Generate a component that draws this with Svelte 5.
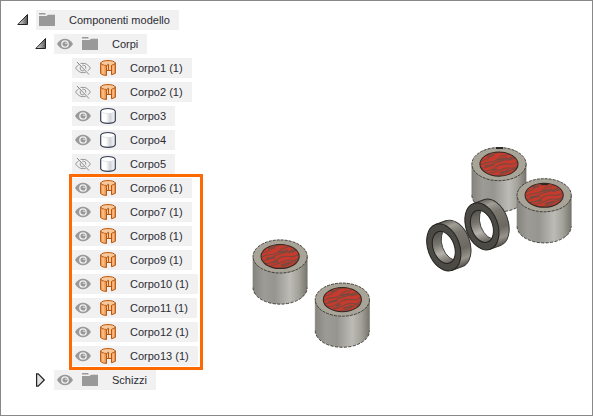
<script>
  let rootOpen = $state(true);
  let bodiesOpen = $state(true);
  let sketchesOpen = $state(false);
  let bodiesVisible = $state(true);
  let sketchesVisible = $state(true);

  let loose = $state([
    { name: 'Corpo1 (1)', kind: 'sheet', visible: false },
    { name: 'Corpo2 (1)', kind: 'sheet', visible: false },
    { name: 'Corpo3', kind: 'solid', visible: true },
    { name: 'Corpo4', kind: 'solid', visible: true },
    { name: 'Corpo5', kind: 'solid', visible: false }
  ]);
  let marked = $state(
    [6, 7, 8, 9, 10, 11, 12, 13].map((n) => ({ name: `Corpo${n} (1)`, kind: 'sheet', visible: true }))
  );

  const cylinders = [
    { x: 499, y: 164, notch: -16 },
    { x: 544, y: 195, notch: -11 },
    { x: 281, y: 256 },
    { x: 343, y: 299 }
  ];
  const rings = [
    { x: 482, y: 226 },
    { x: 444, y: 247 }
  ];
</script>

{#snippet expander(open, toggle, label)}
  <button class="expander" type="button" aria-label={label} aria-expanded={open} onclick={toggle}>
    <svg width="12" height="16" viewBox="0 0 12 16">
      {#if open}
        <path d="M10.500 2.500V12.500H.8Z" fill="url(#wedge)" stroke="#222" />
      {:else}
        <path d="M1.600 1.800H3.200L9.300 8L3.200 14.200H1.600Z" fill="#e2e2e2" stroke="#222" stroke-width="1.200" />
      {/if}
    </svg>
  </button>
{/snippet}

{#snippet eye(visible, toggle, label)}
  <button class="eye" type="button" aria-label={label} aria-pressed={visible} onclick={toggle}>
    <svg width="16" height="16" viewBox="0 0 16 16">
      {#if visible}
        <path d="M0 8C2.200 4.300 5 2.800 8 2.800S13.800 4.300 16 8C13.800 11.700 11 13.200 8 13.200S2.200 11.700 0 8Z" fill="#999" />
        <circle cx="8" cy="8" r="3.200" fill="#999" stroke="#f1f1f1" stroke-width="1.300" />
        <circle cx="9" cy="7.200" r=".8" fill="#f1f1f1" />
      {:else}
        <g fill="none" stroke="#999">
          <path d="M.6 8C2.800 4.700 5.300 3.300 8 3.300S13.200 4.700 15.400 8C13.200 11.300 10.700 12.700 8 12.700S2.800 11.300 .6 8Z" />
          <circle cx="8" cy="8" r="2.900" />
          <path d="M2.500 2L14.500 14.500" stroke="#f1f1f1" stroke-width="2" />
          <path d="M2 2L14 14.500" stroke="#888" />
        </g>
      {/if}
    </svg>
  </button>
{/snippet}

{#snippet folder()}
  <svg class="icon" width="16" height="16" viewBox="0 0 16 16" fill="#999">
    <path d="M0 1H6L7 2.500H0Z" />
    <path d="M0 4H7.500L9 2.800H16V14H0Z" />
  </svg>
{/snippet}

{#snippet bodyIcon(kind)}
  <svg class="icon" width="16" height="16" viewBox="0 0 16 16">
    {#if kind === 'sheet'}
      <g stroke="#b9560f" stroke-linejoin="round">
        <path d="M.6 3C1.500 1.200 4.500 .6 8 .6S14.500 1.200 15.400 3L12 5.500V10.500H7V5.500Z" fill="#fbc89a" stroke="none" />
        <path d="M.6 3V13.500C2 14.800 4 15.400 6.500 15.400V5.500C4 5.300 1.600 4.700 .6 3Z" fill="url(#copper)" />
        <path d="M11.500 5.300V14.800L15.400 13.300V3Q14.500 4.600 11.500 5.300Z" fill="url(#copper)" />
        <path d="M.6 3C1.500 1.200 4.500 .6 8 .6S14.500 1.200 15.400 3M6.500 5.500L8.500 4.200V10.500M6.500 10.500H11.500" fill="none" />
      </g>
    {:else}
      <path d="M.7 3.500C1.500 1.500 4.500 .7 8 .7S14.500 1.500 15.300 3.500V12.700C14.500 14.600 11.500 15.300 8 15.300S1.500 14.600 .7 12.700Z" fill="url(#steel)" stroke="#3b4455" stroke-width="1.200" />
      <ellipse cx="8" cy="3.400" rx="6.400" ry="2.100" fill="#fff" />
      <path d="M1.500 4.200C4 6 12 6 14.500 4.200" fill="none" stroke="#d5d8dd" stroke-width=".7" />
    {/if}
  </svg>
{/snippet}

{#snippet bodyRow(item)}
  <li class="row leaf">
    <div class="bar">
      {@render eye(item.visible, () => (item.visible = !item.visible), `Visibilità ${item.name}`)}
      {@render bodyIcon(item.kind)}
      <span class="label">{item.name}</span>
    </div>
  </li>
{/snippet}

<svg class="defs" width="0" height="0" aria-hidden="true">
  <defs>
    <linearGradient id="wedge"><stop stop-color="#eee" /><stop offset="1" stop-color="#555" /></linearGradient>
    <linearGradient id="copper"><stop stop-color="#ee8c3c" /><stop offset=".4" stop-color="#fbc592" /><stop offset="1" stop-color="#e98434" /></linearGradient>
    <linearGradient id="steel"><stop stop-color="#fff" /><stop offset=".35" stop-color="#fff" /><stop offset=".65" stop-color="#cfd3d9" /><stop offset="1" stop-color="#fff" /></linearGradient>
  </defs>
</svg>

<main>
  <nav aria-label="Componenti modello">
    <ul class="tree">
      <li>
        <div class="row">
          {@render expander(rootOpen, () => (rootOpen = !rootOpen), 'Espandi Componenti modello')}
          <div class="bar">{@render folder()}<span class="label">Componenti modello</span></div>
        </div>
        {#if rootOpen}
          <ul class="nested">
            <li>
              <div class="row">
                {@render expander(bodiesOpen, () => (bodiesOpen = !bodiesOpen), 'Espandi Corpi')}
                <div class="bar">
                  {@render eye(bodiesVisible, () => (bodiesVisible = !bodiesVisible), 'Visibilità Corpi')}
                  {@render folder()}
                  <span class="label">Corpi</span>
                </div>
              </div>
              {#if bodiesOpen}
                <ul class="nested">
                  {#each loose as item}{@render bodyRow(item)}{/each}
                  <li class="marked">
                    <ul>
                      {#each marked as item}{@render bodyRow(item)}{/each}
                    </ul>
                  </li>
                </ul>
              {/if}
            </li>
            <li class="row">
              {@render expander(sketchesOpen, () => (sketchesOpen = !sketchesOpen), 'Espandi Schizzi')}
              <div class="bar">
                {@render eye(sketchesVisible, () => (sketchesVisible = !sketchesVisible), 'Visibilità Schizzi')}
                {@render folder()}
                <span class="label">Schizzi</span>
              </div>
            </li>
          </ul>
        {/if}
      </li>
    </ul>
  </nav>

  <div class="viewport">
    <svg viewBox="250 140 326 214" role="img" aria-label="Modello 3D">
      <defs>
        <linearGradient id="side">
          <stop stop-color="#85847e" /><stop offset=".2" stop-color="#9c9b96" /><stop offset=".4" stop-color="#969590" />
          <stop offset=".68" stop-color="#bcbbb5" /><stop offset=".85" stop-color="#a2a199" /><stop offset="1" stop-color="#77756c" />
        </linearGradient>
        <linearGradient id="rim" x1="0" y1="0" x2="0" y2="1">
          <stop stop-color="#66645d" /><stop offset=".13" stop-color="#a09e95" /><stop offset=".3" stop-color="#7a7870" />
          <stop offset=".65" stop-color="#6a6860" /><stop offset=".85" stop-color="#96948b" /><stop offset="1" stop-color="#55534c" />
        </linearGradient>
        <linearGradient id="bore" x1="0" y1="0" x2="0" y2="1">
          <stop stop-color="#55534d" /><stop offset=".35" stop-color="#77756e" /><stop offset=".65" stop-color="#b4b2aa" /><stop offset="1" stop-color="#66645d" />
        </linearGradient>
        <clipPath id="core"><ellipse rx="19" ry="12" /></clipPath>
        <clipPath id="hole"><ellipse rx="10.600" ry="16.600" /></clipPath>
        <g id="cylinder">
          <path d="M-27 0V31A27 16.500 0 0 0 27 31V0Z" fill="url(#side)" />
          <path d="M-27 0V31M27 0V31" stroke="#77766f" stroke-width=".6" />
          <path d="M-27 31A27 16.500 0 0 0 27 31" fill="none" stroke="#34332f" stroke-width=".9" stroke-dasharray="3 1.500" />
          <ellipse rx="27" ry="16.500" fill="#a8a497" stroke="#34332f" stroke-width=".9" stroke-dasharray="3 1" />
          <ellipse rx="19" ry="12" fill="#c63b2d" />
          <g clip-path="url(#core)" fill="none" stroke="#7d493e" stroke-width="1.100">
            <path d="M-20-3Q-12-4-8-8T4-12M-19 1Q-14-2-9-2T2-8Q7-8 11-11M-18 4Q-12 4-8 1T2-3T15-8M-15 7Q-8 7-3 3T9 0T20-4M-10 9Q-5 9 1 6T11 4T20 0M-5 12Q3 11 8 8T18 4" />
            <path d="M-12-8L-5-9M-2-4L8-6M-14 2L-5 1M1 9L10 6M8-4L16-6M-7 6L-2 5" stroke-width="2" />
          </g>
          <ellipse rx="19" ry="12" fill="none" stroke="#2f2824" />
        </g>
        <g id="ring">
          <g transform="rotate(-20)">
            <path d="M0-24.300H10.800A15.800 24.300 0 0 1 10.800 24.300H0Z" fill="url(#rim)" stroke="#2e2d29" stroke-width=".9" />
            <ellipse rx="15.800" ry="24.300" fill="#4b4a44" stroke="#23221f" />
            <ellipse rx="10.600" ry="16.600" fill="url(#bore)" />
            <ellipse cx="9.500" rx="10.600" ry="16.600" fill="#fff" stroke="#33312d" stroke-width=".8" clip-path="url(#hole)" />
            <ellipse rx="10.600" ry="16.600" fill="none" stroke="#23221f" />
          </g>
        </g>
      </defs>
      {#each cylinders as c}
        <use href="#cylinder" x={c.x} y={c.y} />
        {#if c.notch}
          <path d="M{c.x - 3} {c.y + c.notch}h7" stroke="#2a2926" stroke-width="2" />
        {/if}
      {/each}
      {#each rings as r}
        <use href="#ring" x={r.x} y={r.y} />
      {/each}
    </svg>
  </div>
</main>

<style>
  :global(body) {
    margin: 0;
    background: #fff;
  }
  * {
    box-sizing: border-box;
  }
  .defs {
    position: absolute;
  }
  main {
    display: flex;
    min-height: 100vh;
    border: 1px solid #888;
    font: 11px/20px 'Liberation Sans', Arial, sans-serif;
    color: #2c2c34;
  }
  nav {
    flex: none;
    padding: 9px 0 0 16px;
  }
  ul {
    margin: 0;
    padding: 0;
    list-style: none;
  }
  .nested {
    margin-left: 18px;
  }
  .row {
    display: flex;
    align-items: center;
    gap: 7px;
    height: 20px;
    margin-bottom: 4px;
  }
  .leaf {
    padding-left: 19px;
  }
  .bar {
    display: flex;
    align-items: center;
    height: 20px;
    padding: 0 9px 0 3px;
    background: #f1f1f1;
    white-space: nowrap;
  }
  .label {
    margin-left: 14px;
  }
  button {
    display: block;
    flex: none;
    padding: 0;
    border: 0;
    background: none;
    cursor: pointer;
  }
  svg {
    display: block;
  }
  .expander {
    width: 12px;
  }
  .eye {
    width: 16px;
    margin-right: 9px;
  }
  .icon {
    flex: none;
  }
  .marked {
    position: relative;
  }
  .marked::after {
    content: '';
    position: absolute;
    inset: -4px -5px -4px 16px;
    border: 3px solid #ff6a00;
    pointer-events: none;
  }
  .viewport {
    flex: 1;
    min-width: 0;
    padding: 139px 16px 0 51px;
  }
  .viewport svg {
    width: 100%;
  }
</style>
